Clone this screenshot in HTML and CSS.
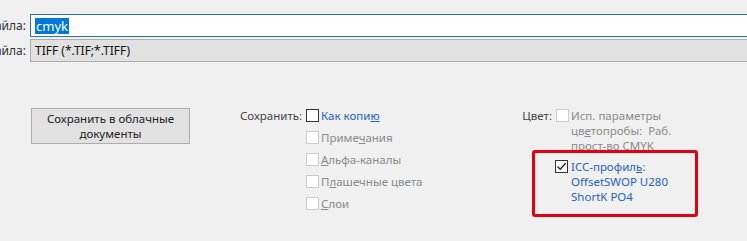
FILE: index.html
```html
<!DOCTYPE html>
<html lang="ru">
<head>
  <meta charset="UTF-8">
  <title>Сохранить как</title>
  <link rel="stylesheet" href="styles.css">
</head>
<body>

  <div class="file-fields">
    <div class="field-row">
      <div class="field-label"><span>Имя файла:</span></div>
      <div class="field field-name"><span class="selected">cmyk</span></div>
    </div>
    <div class="field-row">
      <div class="field-label"><span>Тип файла:</span></div>
      <div class="field field-type">TIFF (*.TIF;*.TIFF)</div>
    </div>
  </div>

  <div class="options">
    <button class="cloud-btn">Сохранить в облачные<br>документы</button>

    <div class="group save-group">
      <div class="group-label">Сохранить:</div>
      <div class="checks">
        <div class="check"><span class="box"></span><span class="link">Как копи<u>ю</u></span></div>
        <div class="check disabled"><span class="box"></span><span>Приме<u>ч</u>ания</span></div>
        <div class="check disabled"><span class="box"></span><span><u>А</u>льфа-каналы</span></div>
        <div class="check disabled"><span class="box"></span><span>П<u>л</u>ашечные цвета</span></div>
        <div class="check disabled"><span class="box"></span><span><u>С</u>лои</span></div>
      </div>
    </div>

    <div class="group color-group">
      <div class="group-label">Цвет:</div>
      <div class="checks color-checks">
        <div class="check disabled"><span class="box"></span><span>Исп. параметры<br>цв<u>е</u>топробы:&nbsp; Раб.<br>прост-во CMYK</span></div>
        <div class="check icc">
          <span class="box checked">
            <svg width="11" height="11" viewBox="0 0 11 11"><path d="M1.5 5.5 L4.2 8.3 L9.6 2.2" fill="none" stroke="#222" stroke-width="1.3"/></svg>
          </span>
          <span class="link">ICC-профил<u>ь</u>:<br>OffsetSWOP U280<br>ShortK PO4</span>
        </div>
        <div class="highlight"></div>
      </div>
    </div>
  </div>

</body>
</html>
```

FILE: styles.css
```css
html {
  background: #f0f0f0;
}

body {
  margin: 0;
  min-height: 241px;
  font-family: 'Segoe UI', 'Noto Sans', sans-serif;
  font-size: 11.5px;
  line-height: 15px;
  color: #444;
}

.file-fields {
  padding-top: 14px;
  display: flex;
  flex-direction: column;
  gap: 2px;
}

.field-row {
  display: flex;
  align-items: center;
  gap: 4px;
}

.field-label {
  width: 26px;
  display: flex;
  justify-content: flex-end;
  overflow: hidden;
  white-space: nowrap;
  color: #333;
  font-size: 12px;
}

.field {
  flex: 1;
  height: 23px;
  box-sizing: border-box;
  margin-right: -6px;
  display: flex;
  align-items: center;
  padding-left: 4px;
  font-size: 12px;
  color: #111;
}

.field-name {
  background: #fff;
  border: 1px solid #2c72b5;
  font-size: 13px;
}

.field-type {
  background: #e1e1e1;
  border: 1px solid #adadad;
}

.selected {
  background: #0078d7;
  color: #fff;
  line-height: 16px;
  padding: 0 1px;
}

.options {
  display: flex;
  align-items: flex-start;
  margin-top: 46px;
  padding-left: 31px;
}

.cloud-btn {
  width: 159px;
  height: 36px;
  background: #e1e1e1;
  border: 1px solid #adadad;
  font-family: inherit;
  font-size: 11.5px;
  line-height: 15px;
  color: #222;
  padding: 0;
}

.group {
  display: flex;
  align-items: flex-start;
  gap: 4px;
}

.save-group {
  width: 280px;
  margin-left: 42px;
}

.group-label {
  text-align: right;
  white-space: nowrap;
}

.save-group .group-label {
  width: 70px;
}

.color-group .group-label {
  width: 40px;
}

.checks {
  display: flex;
  flex-direction: column;
  gap: 7px;
}

.color-checks {
  position: relative;
  gap: 6px;
}

.check {
  display: flex;
  align-items: flex-start;
  gap: 2px;
  white-space: nowrap;
}

.box {
  width: 13px;
  height: 13px;
  box-sizing: border-box;
  border: 1px solid #333;
  background: #fff;
  margin-top: 1px;
  display: flex;
  align-items: center;
  justify-content: center;
}

.disabled {
  color: #8a8a8a;
}

.disabled .box {
  border-color: #cccccc;
}

.icc .box {
  margin-left: -1px;
  margin-right: 1px;
}

.link {
  color: #1f63bf;
}

.highlight {
  position: absolute;
  left: -24px;
  top: 42px;
  width: 166px;
  height: 67px;
  box-sizing: border-box;
  border: 3px solid #e3000f;
  border-radius: 3px;
}
```
